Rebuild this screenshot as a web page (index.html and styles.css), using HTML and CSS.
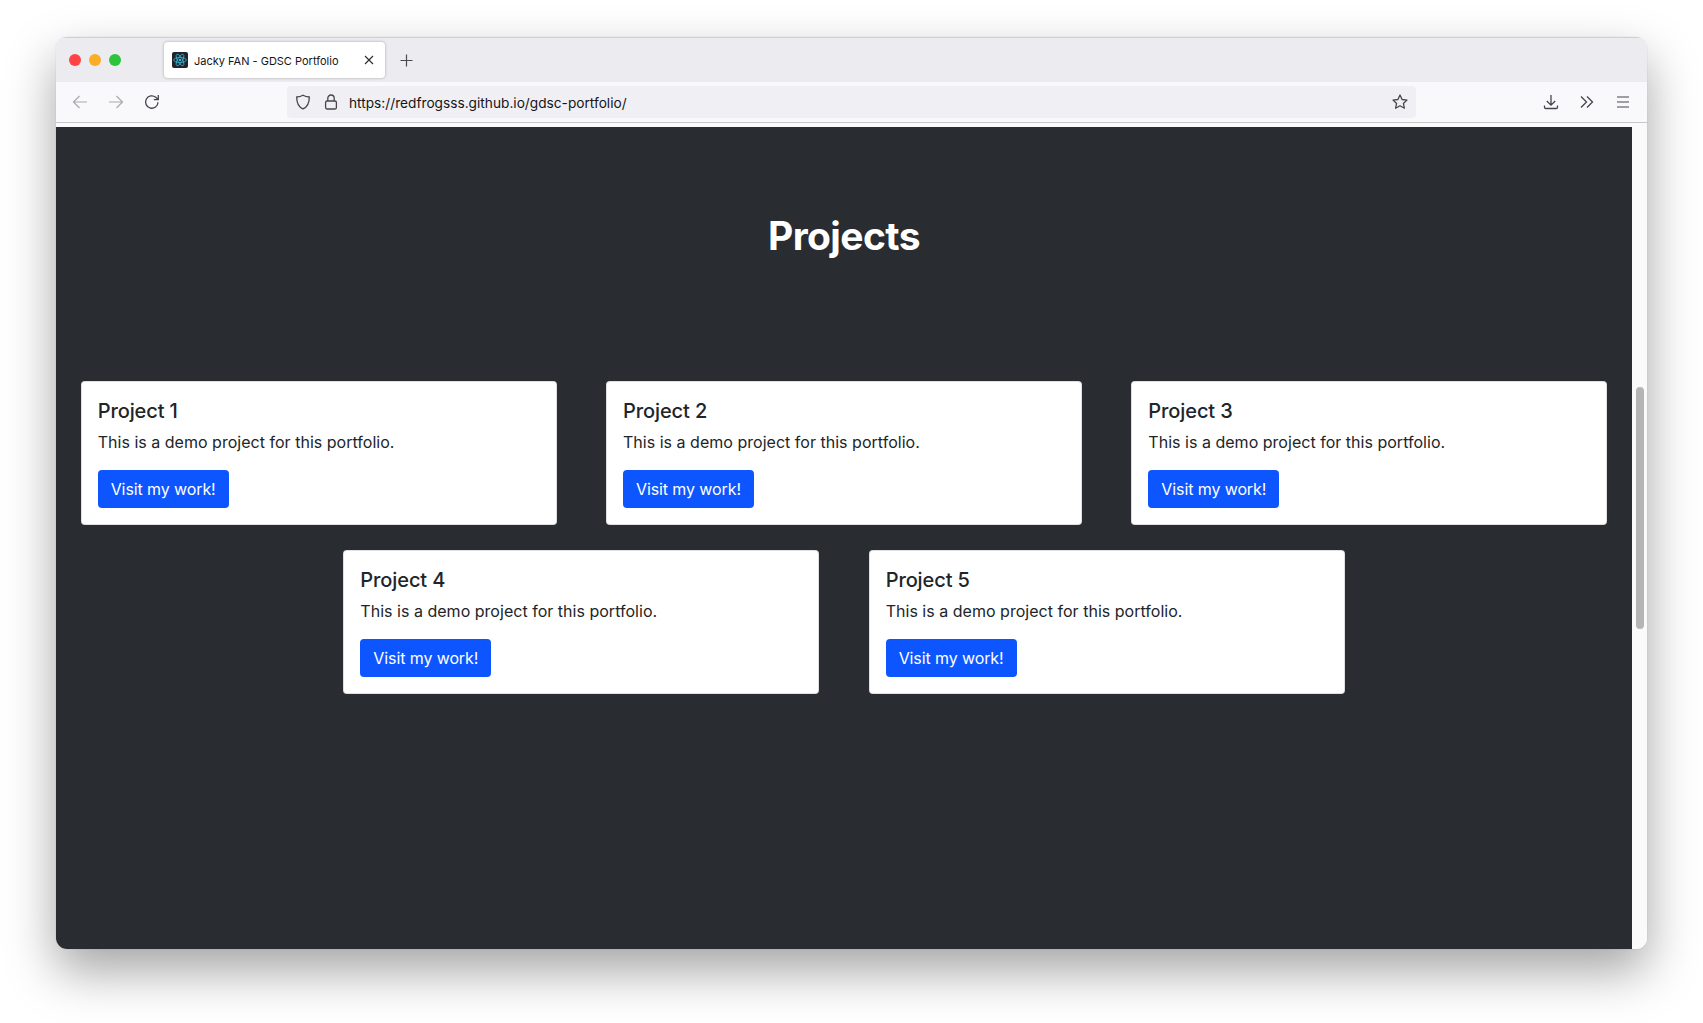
FILE: index.html
```html
<!DOCTYPE html>
<html lang="en">
<head>
  <meta charset="UTF-8">
  <meta name="viewport" content="width=device-width, initial-scale=1.0">
  <title>Jacky FAN - GDSC Portfolio</title>
  <link rel="stylesheet" href="styles.css">
</head>
<body>

  <div class="window">

    <!-- Tab bar -->
    <div class="tabbar">
      <div class="traffic">
        <span class="dot dot-red"></span>
        <span class="dot dot-yellow"></span>
        <span class="dot dot-green"></span>
      </div>
      <div class="tab">
        <span class="favicon">
          <svg width="16" height="16" viewBox="0 0 16 16" fill="none" stroke="#35b8d6" stroke-width="0.8">
            <ellipse cx="8" cy="8" rx="6.4" ry="2.5"/>
            <ellipse cx="8" cy="8" rx="6.4" ry="2.5" transform="rotate(60 8 8)"/>
            <ellipse cx="8" cy="8" rx="6.4" ry="2.5" transform="rotate(120 8 8)"/>
            <circle cx="8" cy="8" r="1.3" fill="#35b8d6" stroke="none"/>
          </svg>
        </span>
        <span class="tab-title">Jacky FAN - GDSC Portfolio</span>
        <svg class="tab-close" width="10" height="10" viewBox="0 0 10 10" fill="none" stroke="#2b2a33" stroke-width="1.1">
          <path d="M1 1l8 8M9 1l-8 8"/>
        </svg>
      </div>
      <svg class="new-tab" width="13" height="13" viewBox="0 0 13 13" fill="none" stroke="#4a4a52" stroke-width="1.2">
        <path d="M6.5 .5v12M.5 6.5h12"/>
      </svg>
    </div>

    <!-- Toolbar -->
    <div class="toolbar">
      <div class="nav-buttons">
        <svg width="16" height="16" viewBox="0 0 16 16" fill="none" stroke="#a9a9ae" stroke-width="1.2">
          <path d="M15 8H1.5M7.5 2l-6 6 6 6"/>
        </svg>
        <svg width="16" height="16" viewBox="0 0 16 16" fill="none" stroke="#a9a9ae" stroke-width="1.2">
          <path d="M1 8h13.5M8.5 2l6 6-6 6"/>
        </svg>
        <svg width="16" height="16" viewBox="0 0 16 16" fill="none" stroke="#45454c" stroke-width="1.3">
          <path d="M14 8.2A6.2 6.2 0 1 1 11.7 3.2L14 5.2"/>
          <path d="M14.3 1v4.6H9.8" />
        </svg>
      </div>
      <div class="urlbar">
        <svg width="16" height="16" viewBox="0 0 16 16" fill="none" stroke="#45454c" stroke-width="1.3">
          <path d="M8 1.2c2 1.2 4 1.7 6.3 1.8C14.4 9 12.4 13 8 14.9 3.6 13 1.6 9 1.7 3 4 2.9 6 2.4 8 1.2z"/>
        </svg>
        <svg class="lock" width="14" height="16" viewBox="0 0 14 16" fill="none" stroke="#45454c" stroke-width="1.3">
          <rect x="1.6" y="7" width="10.8" height="8" rx="1.6"/>
          <path d="M3.8 7V4.200a3.200 3.200 0 0 1 6.400 0V7"/>
        </svg>
        <span class="url">https://redfrogsss.github.io/gdsc-portfolio/</span>
        <svg class="star" width="16" height="16" viewBox="0 0 16 16" fill="none" stroke="#45454c" stroke-width="1.3" stroke-linejoin="round">
          <path d="M8 1l2.100 4.500 4.900.6-3.600 3.300 1 4.800L8 11.800l-4.400 2.400 1-4.800L1 6.100l4.900-.6z"/>
        </svg>
      </div>
      <div class="tool-buttons">
        <svg width="16" height="16" viewBox="0 0 16 16" fill="none" stroke="#45454c" stroke-width="1.3">
          <path d="M8 1v10M3.800 7L8 11.200 12.200 7M1.500 11.500v1.700c0 .8.500 1.300 1.300 1.300h10.400c.8 0 1.300-.5 1.300-1.300v-1.700"/>
        </svg>
        <svg width="16" height="16" viewBox="0 0 16 16" fill="none" stroke="#45454c" stroke-width="1.3">
          <path d="M2 2.500L7.500 8 2 13.500M8 2.500L13.500 8 8 13.500"/>
        </svg>
        <svg width="16" height="16" viewBox="0 0 16 16" fill="none" stroke="#45454c" stroke-width="1.2">
          <path d="M2 3h12M2 8h12M2 13h12"/>
        </svg>
      </div>
    </div>

    <!-- Page -->
    <div class="viewport">
      <div class="page">
        <h1 class="page-title">Projects</h1>
        <div class="projects">
          <div class="card">
            <h5>Project 1</h5>
            <p>This is a demo project for this portfolio.</p>
            <a class="button" href="#">Visit my work!</a>
          </div>
          <div class="card">
            <h5>Project 2</h5>
            <p>This is a demo project for this portfolio.</p>
            <a class="button" href="#">Visit my work!</a>
          </div>
          <div class="card">
            <h5>Project 3</h5>
            <p>This is a demo project for this portfolio.</p>
            <a class="button" href="#">Visit my work!</a>
          </div>
          <div class="card">
            <h5>Project 4</h5>
            <p>This is a demo project for this portfolio.</p>
            <a class="button" href="#">Visit my work!</a>
          </div>
          <div class="card">
            <h5>Project 5</h5>
            <p>This is a demo project for this portfolio.</p>
            <a class="button" href="#">Visit my work!</a>
          </div>
        </div>
      </div>
      <div class="scrollbar">
        <div class="scroll-thumb"></div>
      </div>
    </div>

  </div>

</body>
</html>
```

FILE: styles.css
```css
* {
  box-sizing: border-box;
}

html, body {
  height: 100%;
}

body {
  margin: 0;
  padding: 37px 56px 74px;
  background-color: #ffffff;
  font-family: Inter, "Liberation Sans", sans-serif;
  overflow: hidden;
}

.window {
  display: flex;
  flex-direction: column;
  height: 912px;
  border-radius: 11px;
  overflow: hidden;
  background-color: #fafafa;
  box-shadow: 0 0 0 0.5px rgba(0, 0, 0, 0.06), 0 22px 50px rgba(0, 0, 0, 0.36);
}

.tabbar {
  display: flex;
  align-items: center;
  flex-shrink: 0;
  height: 45px;
  padding-left: 13px;
  background-color: #ecebf0;
  border-top: 1px solid #d0d0d4;
}

.traffic {
  display: flex;
  gap: 8px;
  margin-right: 43px;
}

.dot {
  width: 12px;
  height: 12px;
  border-radius: 50%;
}

.dot-red {
  background-color: #fb4443;
}

.dot-yellow {
  background-color: #fbad25;
}

.dot-green {
  background-color: #2cc43a;
}

.tab {
  display: flex;
  align-items: center;
  width: 221px;
  height: 36px;
  padding-left: 8px;
  background-color: #ffffff;
  border-radius: 4px;
  box-shadow: 0 0 3px rgba(0, 0, 0, 0.3);
}

.favicon {
  display: flex;
  width: 16px;
  height: 16px;
  margin-right: 6px;
  background-color: #20232a;
  border-radius: 2px;
}

.tab-title {
  width: 170px;
  padding-top: 1px;
  font-size: 11px;
  color: #15141a;
  white-space: nowrap;
}

.new-tab {
  margin-left: 15px;
}

.toolbar {
  display: flex;
  align-items: center;
  flex-shrink: 0;
  height: 41px;
  background-color: #f9f9fb;
  border-bottom: 1px solid #c6c6ca;
}

.nav-buttons {
  display: flex;
  gap: 20px;
  width: 231px;
  padding-left: 16px;
}

.urlbar {
  display: flex;
  align-items: center;
  width: 1129px;
  height: 32px;
  padding: 0 8px;
  background-color: #f0f0f4;
  border-radius: 4px;
}

.lock {
  margin-left: 13px;
}

.url {
  margin-left: 11px;
  padding-top: 2px;
  font-size: 13.7px;
  color: #15141a;
}

.star {
  margin-left: auto;
}

.tool-buttons {
  display: flex;
  align-items: center;
  gap: 20px;
  padding-left: 127px;
}

.viewport {
  display: flex;
  flex: 1;
  min-height: 0;
  padding-top: 4px;
  background-color: #fafafa;
}

.page {
  width: 1576px;
  background-color: #292c31;
}

.page-title {
  margin: 0;
  padding-top: 85px;
  font-size: 39px;
  line-height: 48px;
  font-weight: 700;
  letter-spacing: -0.6px;
  color: #ffffff;
  text-align: center;
}

.projects {
  display: flex;
  flex-wrap: wrap;
  justify-content: center;
  gap: 25px 49.33px;
  margin-top: 121px;
}

.card {
  width: 476px;
  height: 144px;
  padding: 17px 16px 16px;
  background-color: #ffffff;
  border: 1px solid rgba(0, 0, 0, 0.125);
  border-radius: 4px;
}

.card h5 {
  margin: 0 0 7px;
  font-size: 20px;
  line-height: 24px;
  font-weight: 500;
  letter-spacing: -0.1px;
  color: #212529;
}

.card p {
  margin: 0 0 16px;
  font-size: 16px;
  line-height: 24px;
  letter-spacing: 0.02px;
  color: #212529;
}

.button {
  display: inline-block;
  padding: 7px 13px;
  font-size: 16px;
  font-weight: 400;
  line-height: 24px;
  letter-spacing: -0.1px;
  color: #ffffff;
  text-decoration: none;
  background-color: #0d56ff;
  border-radius: 4px;
}

.scrollbar {
  flex: 1;
  padding: 260px 3px 0 4px;
}

.scroll-thumb {
  height: 242px;
  background-color: #b5b5b5;
  border-radius: 4px;
}
```
